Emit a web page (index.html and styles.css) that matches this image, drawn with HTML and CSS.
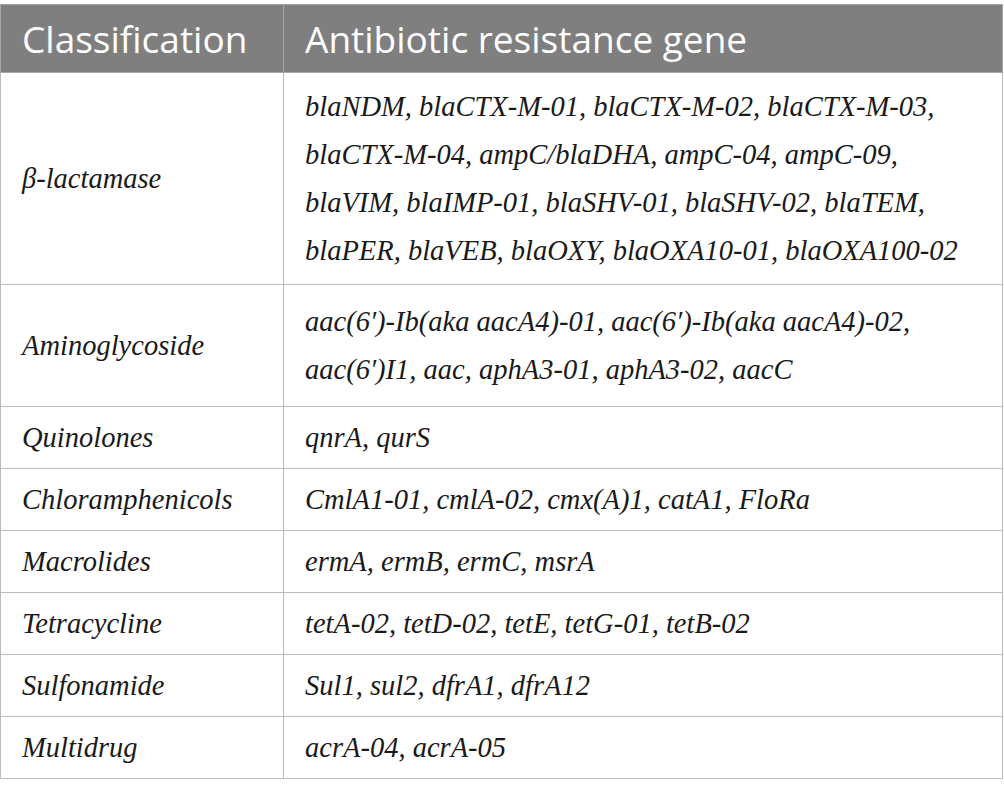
FILE: index.html
```html
<!DOCTYPE html>
<html>
<head>
<meta charset="utf-8">
<link rel="stylesheet" href="styles.css">
</head>
<body>
<table class="tbl">
  <thead>
    <tr>
      <th class="col-a">Classification</th>
      <th class="col-b">Antibiotic resistance gene</th>
    </tr>
  </thead>
  <tbody>
    <tr class="row-xl">
      <td>β-lactamase</td>
      <td>blaNDM, blaCTX-M-01, blaCTX-M-02, blaCTX-M-03,<br>blaCTX-M-04, ampC/blaDHA, ampC-04, ampC-09,<br>blaVIM, blaIMP-01, blaSHV-01, blaSHV-02, blaTEM,<br>blaPER, blaVEB, blaOXY, blaOXA10-01, blaOXA100-02</td>
    </tr>
    <tr class="row-lg">
      <td>Aminoglycoside</td>
      <td>aac(6′)-Ib(aka aacA4)-01, aac(6′)-Ib(aka aacA4)-02,<br>aac(6′)I1, aac, aphA3-01, aphA3-02, aacC</td>
    </tr>
    <tr>
      <td>Quinolones</td>
      <td>qnrA, qurS</td>
    </tr>
    <tr>
      <td>Chloramphenicols</td>
      <td>CmlA1-01, cmlA-02, cmx(A)1, catA1, FloRa</td>
    </tr>
    <tr>
      <td>Macrolides</td>
      <td>ermA, ermB, ermC, msrA</td>
    </tr>
    <tr>
      <td>Tetracycline</td>
      <td>tetA-02, tetD-02, tetE, tetG-01, tetB-02</td>
    </tr>
    <tr>
      <td>Sulfonamide</td>
      <td>Sul1, sul2, dfrA1, dfrA12</td>
    </tr>
    <tr>
      <td>Multidrug</td>
      <td>acrA-04, acrA-05</td>
    </tr>
  </tbody>
</table>
</body>
</html>
```

FILE: styles.css
```css
html, body {
  margin: 0;
  padding: 0;
  background: #ffffff;
}
body {
  padding-top: 4px;
}
.tbl {
  border-collapse: collapse;
  width: 1003px;
  table-layout: fixed;
}
.tbl th,
.tbl td {
  border: 1px solid #bdbdbd;
  text-align: left;
  vertical-align: middle;
  padding: 7px 20px 6px 21px;
}
.col-a { width: 241px; }
.tbl th {
  background: #7f7f7f;
  color: #ffffff;
  font-family: "Open Sans", sans-serif;
  font-weight: 400;
  font-size: 37px;
  line-height: 44px;
  height: 67px;
  padding-top: 0;
  padding-bottom: 0;
  border-color: #a6a6a6;
}
.tbl td {
  font-family: "Liberation Serif", serif;
  font-style: italic;
  font-size: 28.5px;
  line-height: 48px;
  color: #1a1a1a;
}
.row-xl td {
  padding-top: 10px;
  padding-bottom: 9px;
}
.row-lg td {
  padding-top: 13px;
  padding-bottom: 12px;
}
```
